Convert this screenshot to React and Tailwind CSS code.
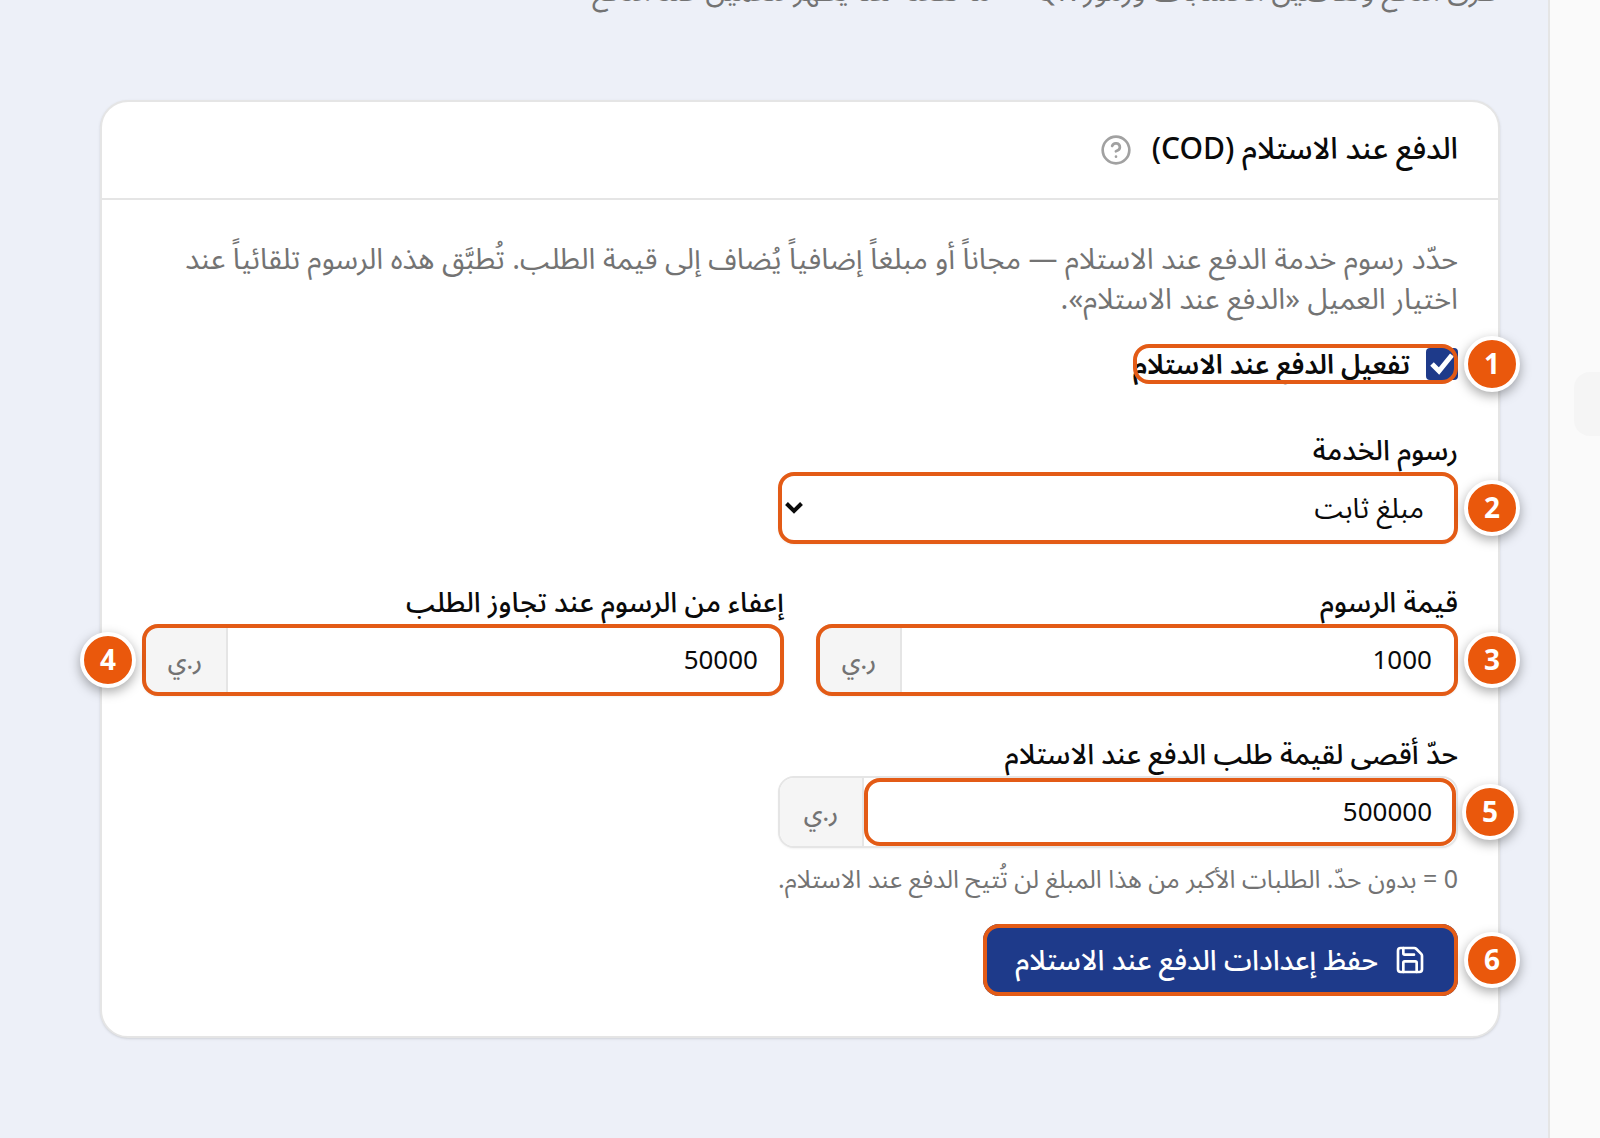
import { useState } from 'react';
import { CircleQuestionMark, Save } from 'lucide-react';

function Callout({ n, side = 'right', className = '', children }) {
    return (
        <div className={`relative ${className}`}>
            {children}
            <span className="pointer-events-none absolute inset-0 rounded-2xl border-4 border-[#e35b16]" />
            <span
                className={`pointer-events-none absolute top-1/2 flex size-14 -translate-y-1/2 items-center justify-center rounded-full border-4 border-white bg-[#ea580c] pt-1 text-[28px] font-bold text-white shadow-[0_4px_12px_rgba(0,0,0,0.35)] ${side === 'right' ? 'left-full ml-[6px]' : 'right-full mr-[6px]'}`}
            >
                {n}
            </span>
        </div>
    );
}

function MoneyInput({ id, value, onChange, n }) {
    const input = (
        <input
            id={id}
            type="text"
            inputMode="numeric"
            value={value}
            onChange={(e) => onChange(e.target.value)}
            className="h-[68px] w-full bg-transparent px-6 text-[26px] outline-none"
        />
    );

    return (
        <div className="flex h-[72px] rounded-2xl border-2 border-[#e5e5e5] bg-white shadow-xs">
            {n ? <Callout n={n} className="min-w-0 flex-1">{input}</Callout> : <div className="min-w-0 flex-1">{input}</div>}
            <span className="flex w-[84px] shrink-0 items-center justify-center rounded-l-[14px] border-r-2 border-[#e5e5e5] bg-[#f5f5f5] pt-1 text-2xl font-medium text-[#737373]">
                ر.ي
            </span>
        </div>
    );
}

function Field({ id, label, className = '', children }) {
    return (
        <div className={`flex flex-col ${className}`}>
            <label htmlFor={id} className="text-[28px] leading-10 font-medium">{label}</label>
            {children}
        </div>
    );
}

export default function App() {
    const [enabled, setEnabled] = useState(true);
    const [feeType, setFeeType] = useState('fixed');
    const [fee, setFee] = useState('1000');
    const [freeAbove, setFreeAbove] = useState('50000');
    const [maxOrder, setMaxOrder] = useState('500000');

    return (
        <div
            dir="rtl"
            className="flex min-h-screen overflow-hidden bg-[#edf0f8] font-['Noto_Sans_Arabic','Noto_Sans','DejaVu_Sans',sans-serif] text-[#0a0a0a]"
        >
            {/* Sidebar edge */}
            <aside className="w-[52px] shrink-0 border-l-2 border-[#e5e5e5] bg-[#fafafa] pt-[372px]">
                <div className="h-16 w-[26px] rounded-l-2xl bg-[#f5f5f5]" />
            </aside>

            <main className="min-w-0 flex-1 pr-12 pl-[100px]">
                <p className="-mt-7 text-[29px] leading-10 text-[#737373]">
                    طرق الدفع وتفاصيل الحسابات ورموز QR — ما تفعّله هنا يظهر للعميل عند الدفع
                </p>

                <section className="mt-[88px] rounded-[28px] border-2 border-[#e5e5e5] bg-white shadow-sm">
                    <header className="flex h-[98px] items-center gap-5 border-b-2 border-[#e5e5e5] px-10">
                        <h2 className="text-[30px] leading-10 font-medium">الدفع عند الاستلام (COD)</h2>
                        <button type="button" aria-label="مساعدة" className="text-[#a1a1a1]">
                            <CircleQuestionMark size={32} />
                        </button>
                    </header>

                    <form className="p-10" onSubmit={(e) => e.preventDefault()}>
                        <p className="text-[29px] leading-10 text-[#737373]">
                            حدّد رسوم خدمة الدفع عند الاستلام — مجاناً أو مبلغاً إضافياً يُضاف إلى قيمة الطلب. تُطبَّق هذه الرسوم تلقائياً عند
                            اختيار العميل «الدفع عند الاستلام».
                        </p>

                        <Callout n={1} className="mt-6 w-fit">
                            <label className="flex h-10 items-center gap-4 text-[27px] font-semibold whitespace-nowrap">
                                <span className="relative flex size-8">
                                    <input
                                        type="checkbox"
                                        checked={enabled}
                                        onChange={(e) => setEnabled(e.target.checked)}
                                        className="peer size-8 appearance-none rounded-sm border-2 border-[#1e3a8a] checked:bg-[#1e3a8a]"
                                    />
                                    <svg viewBox="0 0 32 32" fill="none" stroke="white" strokeWidth="5" className="pointer-events-none absolute inset-0 hidden peer-checked:block">
                                        <path d="M6 16l7 7L26 7" />
                                    </svg>
                                </span>
                                <span className="pt-1">تفعيل الدفع عند الاستلام</span>
                            </label>
                        </Callout>

                        <Field id="fee-type" label="رسوم الخدمة" className="mt-12 max-w-[680px]">
                            <Callout n={2}>
                                <select
                                    id="fee-type"
                                    value={feeType}
                                    onChange={(e) => setFeeType(e.target.value)}
                                    className="block h-[72px] w-full appearance-none rounded-2xl bg-white px-[34px] pt-1 text-[28px] shadow-xs outline-none"
                                >
                                    <option value="fixed">مبلغ ثابت</option>
                                    <option value="free">مجاناً</option>
                                </select>
                                <svg viewBox="0 0 18 12" fill="none" stroke="currentColor" strokeWidth="4" className="pointer-events-none absolute top-[30px] left-[7px] h-3 w-[18px]">
                                    <path d="M1.500 1.500L9 9l7.500-7.500" />
                                </svg>
                            </Callout>
                        </Field>

                        <div className="mt-10 grid grid-cols-2 gap-8">
                            <Field id="fee" label="قيمة الرسوم">
                                <Callout n={3}>
                                    <MoneyInput id="fee" value={fee} onChange={setFee} />
                                </Callout>
                            </Field>
                            <Field id="free-above" label="إعفاء من الرسوم عند تجاوز الطلب">
                                <Callout n={4} side="left">
                                    <MoneyInput id="free-above" value={freeAbove} onChange={setFreeAbove} />
                                </Callout>
                            </Field>
                        </div>

                        <Field id="max-order" label="حدّ أقصى لقيمة طلب الدفع عند الاستلام" className="mt-10 max-w-[680px]">
                            <MoneyInput id="max-order" value={maxOrder} onChange={setMaxOrder} n={5} />
                        </Field>
                        <p className="mt-4 text-[25px] leading-8 text-[#737373]">
                            0 = بدون حدّ. الطلبات الأكبر من هذا المبلغ لن تُتيح الدفع عند الاستلام.
                        </p>

                        <Callout n={6} className="mt-7 w-fit">
                            <button type="submit" className="flex h-[72px] items-center gap-4 rounded-2xl bg-[#1e3a8a] px-8 text-[28px] font-medium text-white">
                                <Save size={32} />
                                <span className="pt-1">حفظ إعدادات الدفع عند الاستلام</span>
                            </button>
                        </Callout>
                    </form>
                </section>
            </main>
        </div>
    );
}
